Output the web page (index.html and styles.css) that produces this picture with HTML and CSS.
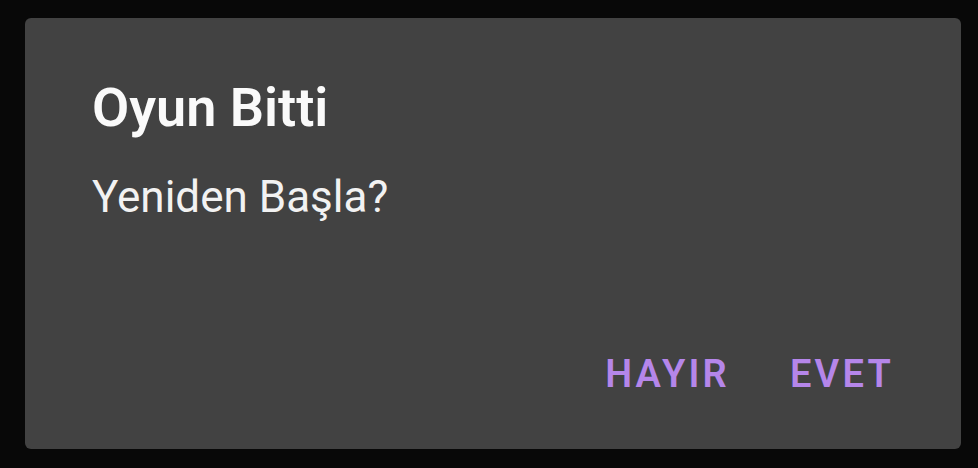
FILE: index.html
```html
<!DOCTYPE html>
<html lang="tr">

<head>
    <meta charset="UTF-8">
    <meta name="viewport" content="width=device-width, initial-scale=1.0">
    <title>Oyun Bitti</title>
    <link rel="stylesheet" href="styles.css">
</head>

<body>
    <div class="dialog">
        <h1 class="dialog-title">Oyun Bitti</h1>
        <p class="dialog-message">Yeniden Başla?</p>
        <div class="dialog-buttons">
            <button class="dialog-button">HAYIR</button>
            <button class="dialog-button">EVET</button>
        </div>
    </div>
</body>

</html>
```

FILE: styles.css
```css
/* Dark backdrop behind the dialog */
body {
    margin: 0;
    height: 100vh;
    background-color: #080808;
    font-family: Roboto, "Noto Sans", sans-serif;
    overflow: hidden;
}

.dialog {
    box-sizing: border-box;
    margin: 18px 0 0 25px;
    width: 936px;
    height: 431px;
    padding: 58px 67px 0 67px;
    background-color: #424242;
    border-radius: 6px;
    display: flex;
    flex-direction: column;
}

.dialog-title {
    margin: 0;
    font-size: 54px;
    line-height: 64px;
    font-weight: 600;
    color: #fafafa;
}

.dialog-message {
    margin: 29px 0 0 0;
    font-size: 44px;
    line-height: 56px;
    color: #f2f2f2;
}

.dialog-buttons {
    margin-top: 127px;
    display: flex;
    justify-content: flex-end;
    gap: 60px;
}

.dialog-button {
    padding: 0;
    border: none;
    background: none;
    font-family: Roboto, "Noto Sans", sans-serif;
    font-size: 38px;
    line-height: 44px;
    font-weight: 600;
    letter-spacing: 3.2px;
    color: #b586ea;
    cursor: pointer;
}
```
